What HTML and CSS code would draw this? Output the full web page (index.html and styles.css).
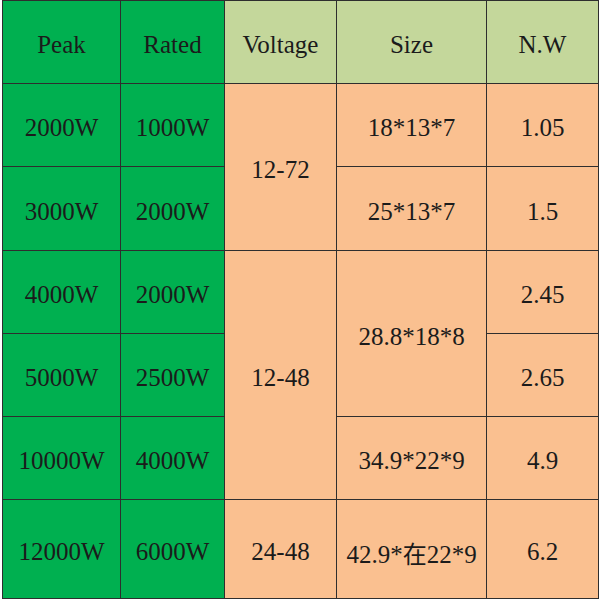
FILE: index.html
```html
<!DOCTYPE html>
<html>
<head>
<meta charset="utf-8">
<link rel="stylesheet" href="styles.css">
</head>
<body>
<table class="spec">
  <colgroup>
    <col class="c1"><col class="c2"><col class="c3"><col class="c4"><col class="c5">
  </colgroup>
  <tr class="head">
    <td class="g">Peak</td>
    <td class="g">Rated</td>
    <td class="lg">Voltage</td>
    <td class="lg">Size</td>
    <td class="lg">N.W</td>
  </tr>
  <tr class="r1">
    <td class="g">2000W</td>
    <td class="g">1000W</td>
    <td class="o" rowspan="2">12-72</td>
    <td class="o">18*13*7</td>
    <td class="o">1.05</td>
  </tr>
  <tr class="r2">
    <td class="g">3000W</td>
    <td class="g">2000W</td>
    <td class="o">25*13*7</td>
    <td class="o">1.5</td>
  </tr>
  <tr class="r3">
    <td class="g">4000W</td>
    <td class="g">2000W</td>
    <td class="o" rowspan="3">12-48</td>
    <td class="o" rowspan="2">28.8*18*8</td>
    <td class="o">2.45</td>
  </tr>
  <tr class="r4">
    <td class="g">5000W</td>
    <td class="g">2500W</td>
    <td class="o">2.65</td>
  </tr>
  <tr class="r5">
    <td class="g">10000W</td>
    <td class="g">4000W</td>
    <td class="o">34.9*22*9</td>
    <td class="o">4.9</td>
  </tr>
  <tr class="r6">
    <td class="g">12000W</td>
    <td class="g">6000W</td>
    <td class="o">24-48</td>
    <td class="o">42.9*<span class="cjk">在</span>22*9</td>
    <td class="o">6.2</td>
  </tr>
</table>
</body>
</html>
```
FILE: styles.css
```css
html, body {
  margin: 0;
  padding: 0;
  background: #ffffff;
}

.spec {
  margin-left: 2px;
  border-collapse: collapse;
  table-layout: fixed;
  width: 597px;
}

.cjk {
  font-family: "Noto Sans CJK SC", sans-serif;
  font-size: 24px;
}

.c1 { width: 118px; }
.c2 { width: 104px; }
.c3 { width: 112px; }
.c4 { width: 150px; }
.c5 { width: 112px; }

.spec td {
  font-family: "Liberation Serif", "Tinos", "Times New Roman", "DejaVu Serif", serif;
  font-size: 25px;
  color: #1b1b1b;
  border: 1px solid #2e2e2e;
  text-align: center;
  vertical-align: middle;
  padding: 6px 0 0 0;
  white-space: nowrap;
  overflow: hidden;
}

.head { height: 83px; }
.r1 { height: 83px; }
.r2 { height: 84px; }
.r3 { height: 83px; }
.r4 { height: 83px; }
.r5 { height: 83px; }
.r6 { height: 99px; }

.g { background: #00b050; }
.lg { background: #c4d79b; }
.o { background: #fac090; }
```
